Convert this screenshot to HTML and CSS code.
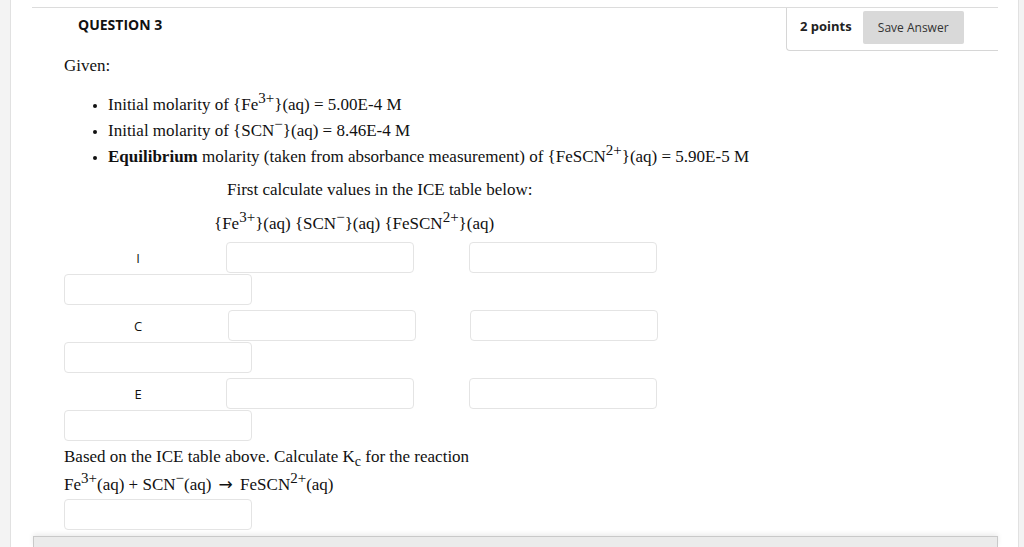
FILE: index.html
```html
<!DOCTYPE html>
<html lang="en">
<head>
<meta charset="utf-8">
<title>Question 3</title>
<link rel="stylesheet" href="styles.css">
</head>
<body>
<div class="page">
  <div class="panel">
    <div class="question">
      <header class="qhead">
        <h2 class="qtitle">QUESTION 3</h2>
        <div class="points">
          <span class="pts">2 points</span>
          <button class="save">Save Answer</button>
        </div>
      </header>
      <div class="qbody">
        <p class="given">Given:</p>
        <ul class="facts">
          <li>Initial molarity of {Fe<sup>3+</sup>}(aq) = 5.00E-4 M</li>
          <li>Initial molarity of {SCN<sup>−</sup>}(aq) = 8.46E-4 M</li>
          <li><b>Equilibrium</b> molarity (taken from absorbance measurement) of {FeSCN<sup>2+</sup>}(aq) = 5.90E-5 M</li>
        </ul>
        <p class="intro">First calculate values in the ICE table below:</p>
        <p class="icehead">{Fe<sup>3+</sup>}(aq) {SCN<sup>−</sup>}(aq) {FeSCN<sup>2+</sup>}(aq)</p>
        <div class="icerow first">
          <span class="lbl">I</span>
          <input class="box" type="text">
          <input class="box second" type="text">
          <input class="box" type="text">
        </div>
        <div class="icerow">
          <span class="lbl">C</span>
          <input class="box shift" type="text">
          <input class="box second" type="text">
          <input class="box" type="text">
        </div>
        <div class="icerow">
          <span class="lbl">E</span>
          <input class="box" type="text">
          <input class="box second" type="text">
          <input class="box" type="text">
        </div>
        <p class="based">Based on the ICE table above. Calculate K<sub>c</sub> for the reaction</p>
        <p class="reaction">Fe<sup>3+</sup>(aq) + SCN<sup>−</sup>(aq) <span class="arrow">→</span> FeSCN<sup>2+</sup>(aq)</p>
        <input class="box answer" type="text">
      </div>
    </div>
    <div class="nextbar"></div>
  </div>
</div>
</body>
</html>
```
FILE: styles.css
```css
html, body {
  margin: 0;
  padding: 0;
  height: 100%;
  overflow: hidden;
}
body {
  background: #f3f3f3;
  font-family: "Liberation Serif", "Times New Roman", serif;
  color: #111;
}
.page {
  padding: 0 5px 0 10px;
  height: 547px;
}
.panel {
  background: #fff;
  border-left: 1px solid #e1e1e1;
  border-right: 1px solid #e1e1e1;
  height: 547px;
  padding: 0 20px 0 21px;
  display: flex;
  flex-direction: column;
}
.question {
  margin-top: 7px;
  border-top: 1px solid #dcdcdc;
  flex: 1;
}
.qhead {
  display: flex;
  justify-content: space-between;
  align-items: flex-start;
  height: 43px;
}
.qtitle {
  margin: 0;
  padding: 7px 0 0 46px;
  font-family: "Open Sans", sans-serif;
  font-weight: 700;
  font-size: 14px;
  line-height: 20px;
  color: #111;
}
.points {
  width: 198px;
  height: 42px;
  border-left: 1px solid #d6d6d6;
  border-bottom: 1px solid #d6d6d6;
  border-bottom-left-radius: 4px;
  display: flex;
  align-items: flex-start;
  padding-left: 13px;
  gap: 11px;
}
.pts {
  font-family: "Open Sans", sans-serif;
  font-weight: 700;
  font-size: 13px;
  line-height: 20px;
  margin-top: 8px;
  color: #222;
}
.save {
  margin-top: 3px;
  width: 101px;
  height: 33px;
  border: none;
  border-radius: 2px;
  background: #d9d9d9;
  font-family: "Open Sans", sans-serif;
  font-size: 12px;
  color: #333;
  padding: 0;
}
.qbody {
  padding-left: 32px;
}
.qbody p {
  margin: 0;
  font-size: 17px;
  line-height: 26px;
}
sup {
  font-size: 15px;
  line-height: 0;
  vertical-align: 7px;
}
sub {
  font-size: 14px;
  line-height: 0;
  vertical-align: -4px;
}
.arrow {
  font-family: "DejaVu Sans", sans-serif;
  font-size: 17px;
  line-height: 0;
  margin: 0 3px;
}
.given {
  margin-top: 2px !important;
}
.facts {
  margin: 13px 0 0 0;
  padding-left: 44px;
  font-size: 17px;
  line-height: 26px;
}
.facts li {
  list-style: disc;
}
.facts li::marker {
  font-size: 13px;
}
.intro {
  margin-top: 7px !important;
  padding-left: 163px;
}
.icehead {
  margin-top: 8px !important;
  padding-left: 150px;
}
.icerow {
  display: flex;
  flex-wrap: wrap;
  align-items: center;
  row-gap: 1px;
  width: 600px;
  margin-top: 6px;
  margin-bottom: -1px;
}
.icerow.first {
  margin-top: 5px;
}
.lbl {
  width: 148px;
  margin-right: 14px;
  text-align: center;
  font-family: "Open Sans", sans-serif;
  font-size: 13px;
  color: #111;
}
.box {
  box-sizing: border-box;
  width: 188px;
  height: 31px;
  margin: 0;
  border: 1px solid #e4e4e4;
  border-radius: 4px;
  background: #fff;
  outline: none;
}
.second {
  margin-left: 55px;
}
.shift {
  margin-left: 2px;
}
.shift + .second {
  margin-left: 54px;
}
.based {
  margin-top: 4px !important;
}
.reaction {
  margin-top: 2px !important;
}
.answer {
  display: block;
  margin-top: 1px;
  height: 31px;
}
.nextbar {
  height: 10px;
  margin: 0 0 0 1px;
  background: #ebebeb;
  border: 1px solid #c9c9c9;
  border-bottom: none;
  box-shadow: 0 -2px 5px rgba(0, 0, 0, 0.08);
}
```
